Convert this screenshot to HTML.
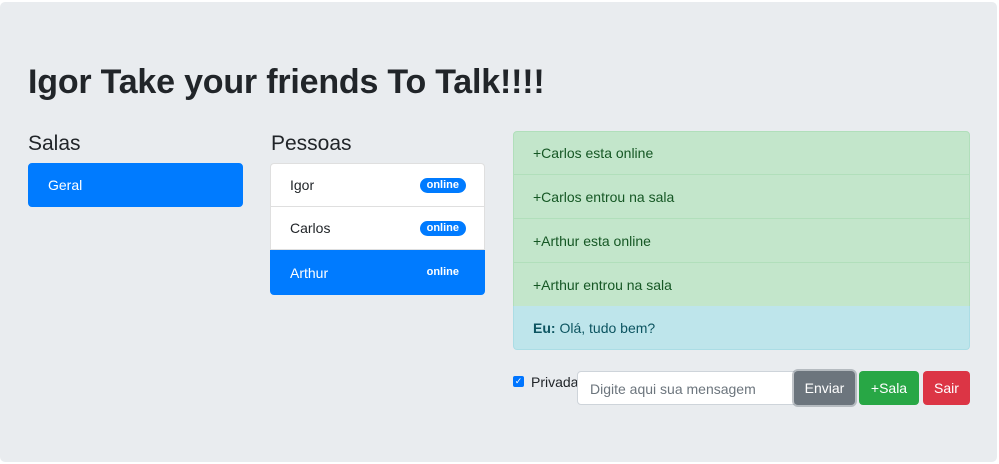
<!DOCTYPE html>
<html><head><meta charset="utf-8"><style>
*{box-sizing:border-box}
body{margin:0;background:#fff;font-family:"Liberation Sans",Arial,sans-serif;color:#212529;width:999px;height:464px;overflow:hidden;position:relative}
.j{position:absolute;left:0;top:2px;width:997px;height:460px;background:#e9ecef;border-radius:5px}
.abs{position:absolute}
h1{position:absolute;left:28px;top:58px;margin:0;font-size:34px;font-weight:bold;line-height:48px;letter-spacing:-0.2px}
.h{position:absolute;top:130px;font-size:21px;font-weight:500;margin:0;line-height:28px}
.li{position:absolute;height:44px;display:flex;align-items:center;padding-left:19px;font-size:14px;background:#fff;border:1px solid rgba(0,0,0,.125)}
.act{background:#007bff;color:#fff;border-color:#007bff}
.b{position:absolute;right:18px;top:14px;background:#007bff;color:#fff;font-size:11px;font-weight:bold;border-radius:8px;padding:1px 7px;line-height:13px}
.c{position:absolute;left:513px;width:457px;height:44px;display:flex;align-items:center;padding-left:19px;font-size:14px;background:#c3e6cb;color:#155724;border:1px solid #b1dfbb;border-top:none}
.btn{position:absolute;top:371px;height:34px;color:#fff;font-size:14px;display:flex;align-items:center;justify-content:center;border-radius:4px}
</style></head><body>
<div class="j"></div>
<h1>Igor Take your friends To Talk!!!!</h1>
<div class="h" style="left:28px">Salas</div>
<div class="h" style="left:271px">Pessoas</div>
<div class="li act" style="left:28px;top:163px;width:215px;border-radius:4px">Geral</div>
<div class="li" style="left:270px;top:163px;width:215px;border-radius:4px 4px 0 0">Igor<span class="b">online</span></div>
<div class="li" style="left:270px;top:207px;width:215px;height:43px;border-top:none">Carlos<span class="b">online</span></div>
<div class="li act" style="left:270px;top:250px;width:215px;height:45px;border-radius:0 0 4px 4px">Arthur<span class="b" style="background:transparent">online</span></div>
<div class="c" style="top:131px;border-top:1px solid #b1dfbb;border-radius:4px 4px 0 0">+Carlos esta online</div>
<div class="c" style="top:175px">+Carlos entrou na sala</div>
<div class="c" style="top:219px">+Arthur esta online</div>
<div class="c" style="top:263px">+Arthur entrou na sala</div>
<div class="c" style="top:306px;background:#bee5eb;color:#0c5460;border-color:#abdde5;border-radius:0 0 4px 4px"><b>Eu:</b>&nbsp;Olá, tudo bem?</div>
<div class="abs" style="left:513px;top:376px;width:11px;height:11px;background:#0075ff;border-radius:2px;color:#fff;font-size:9px;line-height:11px;text-align:center">✓</div>
<div class="abs" style="left:531px;top:374px;font-size:14px">Privada</div>
<div class="abs" style="left:577px;top:371px;width:218px;height:34px;background:#fff;border:1px solid #ced4da;border-radius:4px 0 0 4px;font-size:14px;color:#6c757d;padding:9px 12px">Digite aqui sua mensagem</div>
<div class="btn" style="left:794px;width:61px;background:#6c757d;box-shadow:0 0 0 2px rgba(130,138,145,.5)">Enviar</div>
<div class="btn" style="left:859px;width:60px;background:#28a745">+Sala</div>
<div class="btn" style="left:923px;width:47px;background:#dc3545">Sair</div>
</body></html>
